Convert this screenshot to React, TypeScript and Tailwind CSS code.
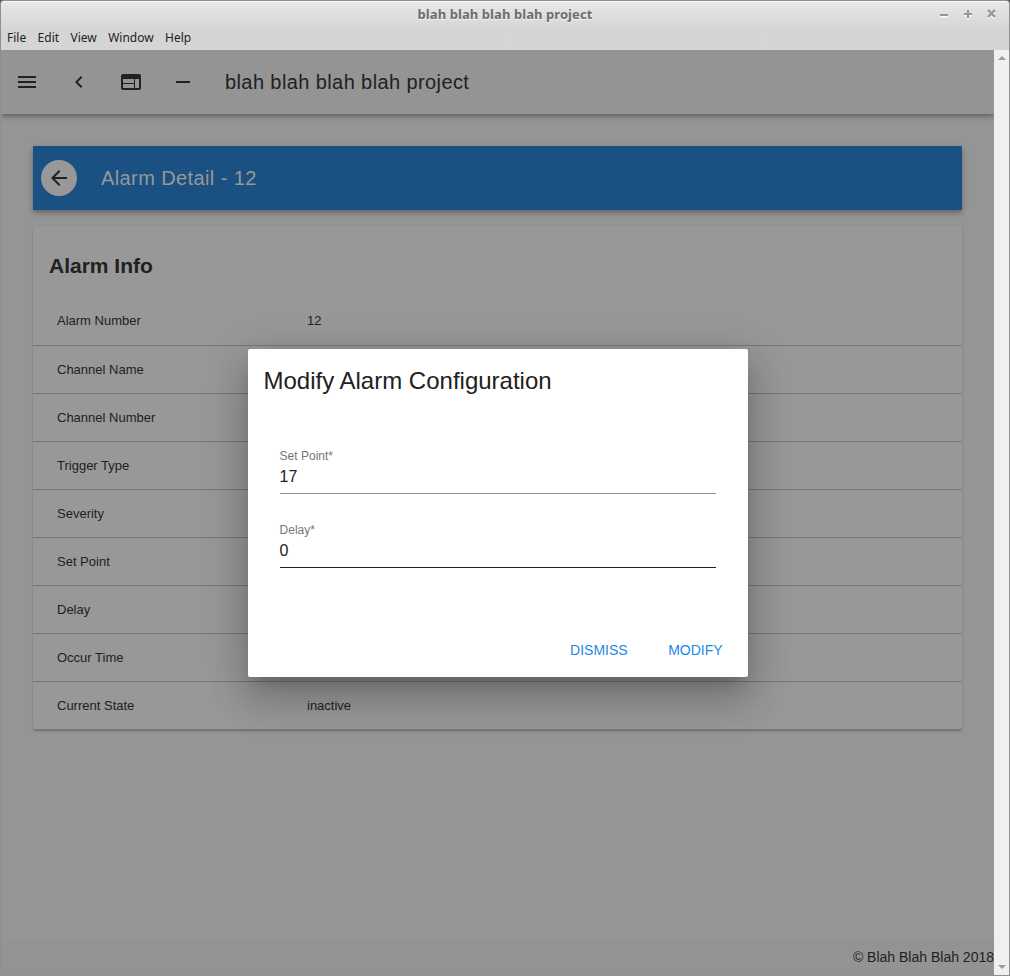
import type { ReactNode } from "react";

const rows: [string, string][] = [
  ["Alarm Number", "12"],
  ["Channel Name", ""],
  ["Channel Number", ""],
  ["Trigger Type", ""],
  ["Severity", ""],
  ["Set Point", ""],
  ["Delay", ""],
  ["Occur Time", ""],
  ["Current State", "inactive"],
];

function Icon({ children }: { children: ReactNode }) {
  return (
    <svg viewBox="0 0 24 24" className="size-6 shrink-0 fill-[#212121]">
      {children}
    </svg>
  );
}

function TitleBar() {
  return (
    <header className="relative flex h-[50px] shrink-0 flex-col rounded-t-[4px] border-x border-t border-[#8f8f8f] bg-linear-to-b from-[#e8e8e8] to-[#d5d5d5] to-60% font-['Noto_Sans',sans-serif] shadow-[inset_0_1px_0_#fafafa]">
      <div className="flex h-[26px] items-center justify-center text-[13px] leading-[26px] font-bold tracking-[0.08px] text-[#6c6c70] [text-shadow:0_1px_0_#f4f4f4]">
        <span>blah blah blah blah project</span>
      </div>
      <svg viewBox="0 0 60 12" className="absolute top-[7px] right-[10px] h-3 w-[60px]" fill="none">
        <path d="M1 8.5h8M25 7.5h8M29 3.5v8M49 3.5l7 7M56 3.5l-7 7" stroke="#fafafa" strokeWidth="2" />
        <path d="M1 7h8M25 6h8M29 2v8" stroke="#969696" strokeWidth="2" />
        <path d="M49 2l7 7M56 2l-7 7" stroke="#969696" strokeWidth="2.4" />
      </svg>
      <nav className="flex h-[22px] items-center gap-[11.4px] pl-[6px] text-[12px] leading-[22px] text-[#222]">
        <span>File</span>
        <span>Edit</span>
        <span>View</span>
        <span>Window</span>
        <span>Help</span>
      </nav>
    </header>
  );
}

function Toolbar() {
  return (
    <div className="relative flex h-16 shrink-0 items-center bg-[#949494] pl-[14px] shadow-[0_2px_4px_-1px_rgba(0,0,0,0.3),0_4px_5px_0_rgba(0,0,0,0.14)]">
      <div className="flex items-center gap-7">
        <Icon><path d="M3 18h18v-2H3v2zm0-5h18v-2H3v2zm0-7v2h18V6H3z" /></Icon>
        <Icon><path d="M15.41 7.41L14 6l-6 6 6 6 1.41-1.41L10.83 12z" /></Icon>
        <Icon><path d="M20 4H4c-1.1 0-1.99.9-1.99 2L2 18c0 1.1.9 2 2 2h16c1.1 0 2-.9 2-2V6c0-1.1-.9-2-2-2zm-5 14H4v-4h11v4zm0-5H4V9h11v4zm5 5h-4V9h4v9z" /></Icon>
        <Icon><path d="M19 13H5v-2h14v2z" /></Icon>
      </div>
      <h1 className="ml-[30px] text-[20px] tracking-[0.4px] text-[#212121]">blah blah blah blah project</h1>
    </div>
  );
}

function AlarmCard() {
  return (
    <section className="mt-4 rounded-[2px] bg-[#989898] shadow-[0_1px_3px_0_rgba(0,0,0,0.12),0_1px_1px_0_rgba(0,0,0,0.08),0_2px_1px_-1px_rgba(0,0,0,0.08)]">
      <h2 className="flex h-[71px] items-center pt-[9px] pl-4 text-[21px] font-bold text-[#212121]">Alarm Info</h2>
      <dl className="text-[13px] text-[#212121]">
        {rows.map(([label, value]) => (
          <div key={label} className="flex h-12 items-center border-b border-[#767676] pl-6 first:h-[49px] last:rounded-b-[2px]">
            <dt className="w-[250px]">{label}</dt>
            <dd>{value}</dd>
          </div>
        ))}
      </dl>
    </section>
  );
}

function Field({ label, value, active = false }: { label: string; value: string; active?: boolean }) {
  return (
    <label className={`flex h-[46px] flex-col border-b ${active ? "border-[#212121]" : "border-[#8f8f8f]"}`}>
      <span className="-ml-[0.4px] text-[12px] leading-[16px] text-[#757575]">{label}</span>
      <span className="-ml-[0.4px] text-[16px] leading-[26px] text-[#212121]">{value}</span>
    </label>
  );
}

function Dialog() {
  return (
    <div role="dialog" className="absolute top-[349px] left-[248px] flex h-[328px] w-[500px] flex-col rounded-[2px] bg-white shadow-[0_11px_15px_-7px_rgba(0,0,0,0.2),0_24px_38px_3px_rgba(0,0,0,0.14),0_9px_46px_8px_rgba(0,0,0,0.12)]">
      <h2 className="flex h-16 items-center pl-[15.5px] text-[24px] text-[#212121]">Modify Alarm Configuration</h2>
      <div className="flex flex-col gap-7 px-8 pt-[35px]">
        <Field label="Set Point*" value="17" />
        <Field label="Delay*" value="0" active />
      </div>
      <div className="mt-auto flex h-[52px] items-start justify-end gap-[40.5px] pr-[25.4px] pt-[15px] text-[14px] leading-[20px] text-[#1e88e5]">
        <button>DISMISS</button>
        <button>MODIFY</button>
      </div>
    </div>
  );
}

function Scrollbar() {
  return (
    <div className="flex w-[15px] shrink-0 flex-col items-center justify-between bg-[#f0f0f0] pt-[6px] pb-[6px]">
      <svg viewBox="0 0 8 4" className="h-1 w-2 fill-[#999]"><path d="M4 0l4 4H0z" /></svg>
      <svg viewBox="0 0 8 4" className="h-1 w-2 fill-[#999]"><path d="M4 4l4-4H0z" /></svg>
    </div>
  );
}

export default function App() {
  return (
    <div className="relative flex h-[976px] w-[1010px] flex-col overflow-hidden bg-[#555] font-['Liberation_Sans',Arial,sans-serif]">
      <TitleBar />
      <div className="flex min-h-0 flex-1 border-x border-b border-[#8f8f8f]">
        <div className="flex w-[993px] flex-col overflow-hidden bg-[#959595]">
          <Toolbar />
          <main className="flex-1 px-8 pt-8">
            <div className="flex h-16 items-center bg-[#1a5082] pl-2 shadow-[0_2px_4px_-1px_rgba(0,0,0,0.25),0_4px_5px_0_rgba(0,0,0,0.12),0_1px_8px_0_rgba(0,0,0,0.08)]">
              <span className="flex size-9 items-center justify-center rounded-full bg-[#989898]">
                <Icon><path d="M20 11H7.83l5.59-5.59L12 4l-8 8 8 8 1.41-1.41L7.83 13H20v-2z" /></Icon>
              </span>
              <h2 className="ml-6 text-[20px] tracking-[0.4px] text-[#989898]">Alarm Detail - 12</h2>
            </div>
            <AlarmCard />
          </main>
          <footer className="flex h-9 shrink-0 items-center justify-end bg-[#939393] text-[14px] text-[#212121]">
            © Blah Blah Blah 2018
          </footer>
        </div>
        <Scrollbar />
      </div>
      <Dialog />
    </div>
  );
}
